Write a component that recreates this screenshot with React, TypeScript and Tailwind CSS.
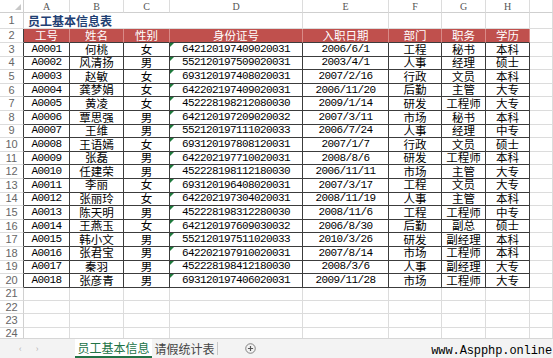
import React from "react";

const COLS =
  "grid grid-cols-[24px_46px_54px_46px_133px_86px_53px_44px_44px_1fr]";

const CJK = "font-['Noto_Sans_CJK_SC',sans-serif]";
const MONO = "font-['Liberation_Mono',monospace] text-[11px] tracking-[-0.6px]";

const heads = ["工号", "姓名", "性别", "身份证号", "入职日期", "部门", "职务", "学历"];

const rows: string[][] = [
  ["A0001", "何桃", "女", "642120197409020031", "2006/6/1", "工程", "秘书", "本科"],
  ["A0002", "风清扬", "男", "552120197509020031", "2003/4/1", "人事", "经理", "硕士"],
  ["A0003", "赵敏", "女", "693120197408020031", "2007/2/16", "行政", "文员", "本科"],
  ["A0004", "龚梦娟", "女", "642202197409020031", "2006/11/20", "后勤", "主管", "大专"],
  ["A0005", "黄凌", "女", "452228198212080030", "2009/1/14", "研发", "工程师", "大专"],
  ["A0006", "覃思强", "男", "642120197209020032", "2007/3/11", "市场", "秘书", "本科"],
  ["A0007", "王维", "男", "552120197111020033", "2006/7/24", "人事", "经理", "中专"],
  ["A0008", "王语嫣", "女", "693120197808120031", "2007/1/7", "行政", "文员", "硕士"],
  ["A0009", "张磊", "男", "642202197710020031", "2008/8/6", "研发", "工程师", "本科"],
  ["A0010", "任建荣", "男", "452228198112180030", "2006/11/11", "市场", "主管", "大专"],
  ["A0011", "李丽", "女", "693120196408020031", "2007/3/17", "工程", "文员", "大专"],
  ["A0012", "张丽玲", "女", "642202197304020031", "2008/11/19", "人事", "主管", "本科"],
  ["A0013", "陈天明", "男", "452228198312280030", "2008/11/6", "工程", "工程师", "中专"],
  ["A0014", "王燕玉", "女", "642120197609030032", "2006/8/30", "后勤", "副总", "硕士"],
  ["A0015", "韩小文", "男", "552120197511020033", "2010/3/26", "研发", "副经理", "本科"],
  ["A0016", "张君宝", "男", "642202197910020031", "2007/8/14", "市场", "工程师", "本科"],
  ["A0017", "秦羽", "男", "452228198412180030", "2008/3/6", "人事", "副经理", "大专"],
  ["A0018", "张彦青", "男", "693120197406020031", "2009/11/28", "市场", "工程师", "大专"],
];

const RowNum = ({ n, dark }: { n: number; dark?: boolean }) => (
  <div
    className={`flex items-center justify-center border-b border-b-[#dcdcdc] border-r font-['Liberation_Sans',sans-serif] text-[11px] leading-none text-[#666] ${
      dark ? "border-r-[#3c3c3c]" : "border-r-[#d0d0d0]"
    }`}
  >
    {n}
  </div>
);

const Blank = () => <div className="border-b border-r border-[#dcdcdc]" />;

export default function App() {
  return (
    <div className="flex h-[358px] w-[553px] flex-col overflow-hidden bg-white">
      <div className="flex-1 overflow-hidden">
        {/* column letters */}
        <div className={`${COLS} h-[13px]`}>
          <div className="relative border-b border-r border-[#cfcfcf]">
            <svg className="absolute bottom-[2px] right-[2px]" width="6" height="6" viewBox="0 0 6 6">
              <polygon points="6,0 6,6 0,6" fill="#c8c8c8" />
            </svg>
          </div>
          {["A", "B", "C", "D", "E", "F", "G", "H", ""].map((l, i) => (
            <div
              key={i}
              className="flex items-center justify-center border-b border-r border-b-[#cfcfcf] border-r-[#dcdcdc] pt-[1px] font-['Liberation_Serif',serif] text-[10px] leading-none text-[#555]"
            >
              {l}
            </div>
          ))}
        </div>

        {/* row 1 title */}
        <div className={`${COLS} h-[16px]`}>
          <RowNum n={1} />
          <div
            className={`col-span-4 flex items-center border-b border-r border-[#dcdcdc] pl-[4px] ${CJK} text-[12px] font-bold leading-none text-[#1f3f73]`}
          >
            员工基本信息表
          </div>
          <Blank />
          <Blank />
          <Blank />
          <Blank />
          <Blank />
        </div>

        {/* row 2 header */}
        <div className={`${COLS} h-[14px]`}>
          <RowNum n={2} dark />
          {heads.map((h) => (
            <div
              key={h}
              className={`flex items-center justify-center border-b border-r border-b-[#3c3c3c] border-r-[#d98a87] bg-[#c0504d] ${CJK} text-[11.5px] leading-none text-white`}
            >
              {h}
            </div>
          ))}
          <div className="border-b border-[#dcdcdc] border-r" />
        </div>

        {/* data rows */}
        {rows.map((r, ri) => (
          <div key={r[0]} className={`${COLS} h-[13.6px]`}>
            <RowNum n={ri + 3} dark />
            {r.map((c, ci) => {
              const mono = ci === 0 || ci === 3 || ci === 4;
              return (
                <div
                  key={ci}
                  className={`relative flex items-center justify-center border-b border-r border-[#3c3c3c] leading-none text-black ${
                    mono ? MONO : `${CJK} text-[11.5px]`
                  }`}
                >
                  {ci === 3 && (
                    <svg className="absolute left-0 top-0" width="4" height="4" viewBox="0 0 4 4">
                      <polygon points="0,0 4,0 0,4" fill="#1e7a3c" />
                    </svg>
                  )}
                  {c}
                </div>
              );
            })}
            <Blank />
          </div>
        ))}

        {/* empty rows */}
        {[21, 22, 23, 24, 25].map((n) => (
          <div key={n} className={`${COLS} h-[13.3px]`}>
            <RowNum n={n} />
            {Array.from({ length: 9 }).map((_, i) => (
              <Blank key={i} />
            ))}
          </div>
        ))}
      </div>

      {/* sheet tabs */}
      <div className="flex h-[20px] items-stretch border-t border-[#d6d6d6] bg-[#f3f3f3] font-['Noto_Sans_CJK_SC',sans-serif] text-[12px] leading-none">
        <div className="flex w-[75px] items-center gap-[14px] pl-[19px] text-[9px] leading-none text-[#b5b5b5]">
          <span>‹</span>
          <span>›</span>
        </div>
        <div className="flex w-[77px] items-center justify-center border-b-2 border-[#217346] bg-white text-[#217346]">
          员工基本信息
        </div>
        <div className="my-[3px] flex w-[66px] items-center justify-center border-r border-[#c8c8c8] text-[#444]">
          请假统计表
        </div>
        <div className="flex w-[64px] items-center justify-center">
          <svg width="11" height="11" viewBox="0 0 12 12">
            <circle cx="6" cy="6" r="5.2" fill="none" stroke="#777" strokeWidth="1" />
            <path d="M6 3.2v5.6M3.2 6h5.6" stroke="#555" strokeWidth="1.3" />
          </svg>
        </div>
        <div className="ml-auto flex items-end pb-[1px] pr-[1px] font-['Liberation_Mono',monospace] text-[12px] tracking-[-0.1px] text-black">
          www.Aspphp.online
        </div>
      </div>
    </div>
  );
}
